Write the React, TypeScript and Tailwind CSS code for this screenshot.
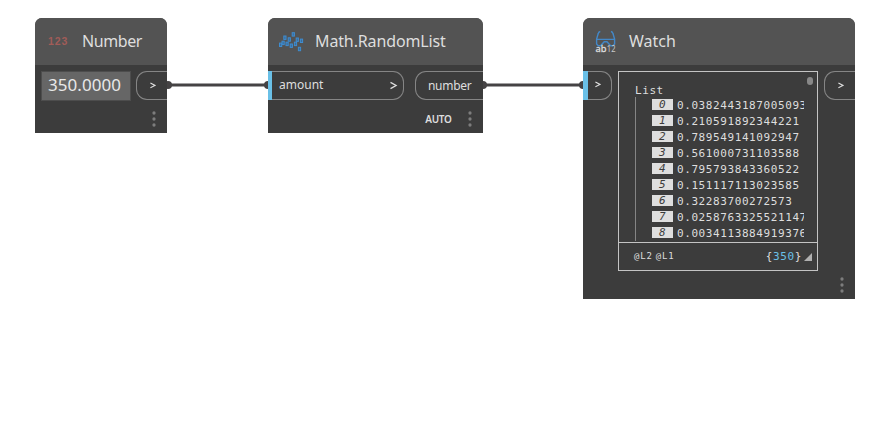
import React from "react";

const rows = [
  "0.0382443187005093",
  "0.210591892344221",
  "0.789549141092947",
  "0.561000731103588",
  "0.795793843360522",
  "0.151117113023585",
  "0.32283700272573",
  "0.0258763325521147",
  "0.0034113884919376",
];

function Dots() {
  return (
    <svg className="block" width="4" height="16" viewBox="0 0 4 16" fill="#7d7d7d">
      <circle cx="2" cy="2" r="1.65" />
      <circle cx="2" cy="8" r="1.65" />
      <circle cx="2" cy="14" r="1.65" />
    </svg>
  );
}

function Chevron({ big = false }: { big?: boolean }) {
  return big ? (
    <svg width="8" height="9" viewBox="0 0 8 9" fill="none" stroke="#dedede" strokeWidth="1.3">
      <path d="M.5 1.4 6.1 4.5 .5 7.6" />
    </svg>
  ) : (
    <svg width="6" height="7" viewBox="0 0 6 7" fill="none" stroke="#dedede" strokeWidth="1.15">
      <path d="M.4 1 5 3.4 .4 5.8" />
    </svg>
  );
}

function OutPort({ children, className }: { children: React.ReactNode; className: string }) {
  return (
    <div className={`h-[29px] rounded-l-[11px] border border-r-0 border-[#858585] flex items-center ${className}`}>
      {children}
    </div>
  );
}

function Header({ icon, title, className }: { icon: React.ReactNode; title: string; className: string }) {
  return (
    <div className="h-[47px] shrink-0 bg-[#535353] flex items-center">
      {icon}
      <span className={`text-[16px] leading-[20px] pb-px text-[#dedede] whitespace-nowrap ${className}`}>{title}</span>
    </div>
  );
}

const squares = [
  [292.2, 32.2], [283.8, 35.5], [288.2, 37.3], [296.2, 37.5], [300.4, 38.6], [282, 40.7],
  [279.5, 42.6], [286, 41.7], [294.4, 41.7], [290.2, 43.5], [298.4, 46.8],
];

function RandomIcon() {
  return (
    <svg className="ml-[10px] shrink-0" width="26" height="24" viewBox="278 29.5 26 24" fill="#3b6d9b" stroke="#3f8ccf" strokeWidth="1">
      {squares.map(([x, y], i) => (
        <rect key={i} x={x} y={y} width="2.2" height="3.4" />
      ))}
    </svg>
  );
}

function WatchIcon() {
  return (
    <svg className="ml-[11px] shrink-0 overflow-visible" width="24" height="26" viewBox="594 28 24 26" fill="none" stroke="#4388c8" strokeWidth="1.4">
      <path d="M600.3 30.5q-1.6.2-2 1.8L596.6 38v5l1.6 1.8h2.4l3.6-4h2.8l3.6 4h2.4l1.6-1.8v-5l-1.7-5.7q-.4-1.6-2-1.8M596.6 38.4h18" />
      <text x="595.5" y="51" textLength="11" lengthAdjust="spacingAndGlyphs" fill="#dedede" stroke="#dedede" strokeWidth=".3" fontSize="9.5" fontFamily="Noto Sans">ab</text>
      <text x="606.8" y="51" textLength="8.7" lengthAdjust="spacingAndGlyphs" fill="#c8c8c8" stroke="none" fontSize="8" fontFamily="Noto Sans">12</text>
    </svg>
  );
}

function NumberNode() {
  return (
    <section className="absolute left-[35px] top-[18px] w-[132.4px] h-[115px] rounded-t-[7px] overflow-hidden bg-[#3c3c3c] flex flex-col">
      <Header
        title="Number"
        className="ml-[14px] tracking-[-0.4px]"
        icon={<span className="ml-[13px] w-[20px] text-[10.5px] leading-none font-bold tracking-[0.9px] text-[#a15c58] font-['Liberation_Sans',sans-serif]">123</span>}
      />
      <div className="flex justify-between pl-[6px] pt-[6px]">
        <div className="w-[90px] h-[30px] bg-[#666666] border border-[#4d4d4d] pl-[6px] text-[17px] leading-[26px] tracking-[0.05px] text-[#e8e8e8]">350.0000</div>
        <OutPort className="w-[31.5px] pl-[13px]"><Chevron /></OutPort>
      </div>
      <div className="flex justify-end pr-[11.5px] pt-[10px]"><Dots /></div>
    </section>
  );
}

function RandomListNode() {
  return (
    <section className="absolute left-[268px] top-[18px] w-[215px] h-[115px] rounded-t-[7px] overflow-hidden bg-[#3c3c3c] flex flex-col">
      <Header title="Math.RandomList" className="ml-[11px] tracking-[-0.13px]" icon={<RandomIcon />} />
      <div className="flex justify-between pt-[6px] text-[12px] text-[#dedede]">
        <div className="w-[136px] h-[29px] flex">
          <div className="w-1 bg-[#6ac0e7]" />
          <div className="flex-1 flex items-center justify-between rounded-r-[11px] border border-l-0 border-[#858585] pl-[7px] pr-[5px]">
            <span className="leading-[16px] pb-px">amount</span>
            <Chevron big />
          </div>
        </div>
        <OutPort className="w-[68px] pl-[12px] tracking-[-0.3px]">number</OutPort>
      </div>
      <div className="flex justify-end items-center gap-[16px] pr-[11.5px] pt-[11px]">
        <span className="text-[10px] leading-[16px] font-semibold tracking-[-0.35px] text-[#dedede]">AUTO</span>
        <Dots />
      </div>
    </section>
  );
}

function WatchNode() {
  return (
    <section className="absolute left-[583px] top-[18px] w-[272.4px] h-[281px] rounded-t-[7px] overflow-hidden bg-[#3c3c3c] flex flex-col">
      <Header title="Watch" className="ml-[11px]" icon={<WatchIcon />} />
      <div className="flex items-start pt-[6px]">
        <div className="w-[29px] h-[29px] flex">
          <div className="w-[5px] bg-[#6ac0e7]" />
          <div className="flex-1 flex items-center rounded-r-[11px] border border-l-0 border-[#858585] pl-[7px] pb-[2px]"><Chevron /></div>
        </div>
        <div className="ml-[6px] w-[200px] h-[200px] border border-[#c4c4c4] flex flex-col font-['DejaVu_Sans_Mono',monospace] text-[11px] tracking-[0.59px] text-[#dedede]">
          <div className="h-[170px] pl-4 pr-[4px] flex justify-between overflow-hidden">
            <div className="w-[169px] pt-[10px] overflow-hidden">
              <div className="h-[15px] leading-[17px]">List</div>
              <div className="border-l border-[#858585] h-[144px] pl-[16px] pt-px">
                {rows.map((value, i) => (
                  <div key={i} className="h-4 flex items-start">
                    <div className="w-[21px] h-[11px] mt-px shrink-0 bg-[#dedede] text-[#3c3c3c] text-center italic leading-[11px]">{i}</div>
                    <span className="ml-[4px] leading-[15px] whitespace-nowrap">{value}</span>
                  </div>
                ))}
              </div>
            </div>
            <div className="mt-[5px] w-[6px] h-[8px] rounded-full bg-[#888888]" />
          </div>
          <div className="flex-1 border-t border-[#c4c4c4] flex items-center pt-px pl-[15px] pr-[5px]">
            <span className="text-[9px] tracking-[0.85px]">@L2</span>
            <span className="ml-[3px] text-[9px] tracking-[0.85px]">@L1</span>
            <span className="ml-auto">{"{"}<span className="text-[#6ac0e7]">350</span>{"}"}</span>
            <svg className="ml-[2px]" width="8" height="8"><path d="M8 0v8H0z" fill="#b0b0b0" /></svg>
          </div>
        </div>
        <OutPort className="ml-[6px] w-[31.5px] pl-[13px]"><Chevron /></OutPort>
      </div>
      <div className="flex justify-end pr-[11px] pt-[6px]"><Dots /></div>
    </section>
  );
}

export default function App() {
  return (
    <main className="relative w-[890px] h-[442px] overflow-hidden bg-white font-['Noto_Sans',sans-serif]">
      <svg className="absolute inset-0" width="890" height="442" fill="#454344" stroke="#454344">
        <path d="M168 85H268M483 85H583" strokeWidth="3" />
        <g stroke="none">
          <circle cx="168" cy="85" r="4" />
          <circle cx="268" cy="85" r="4" />
          <circle cx="483" cy="85" r="4" />
          <circle cx="583" cy="85" r="4" />
        </g>
      </svg>
      <NumberNode />
      <RandomListNode />
      <WatchNode />
    </main>
  );
}
